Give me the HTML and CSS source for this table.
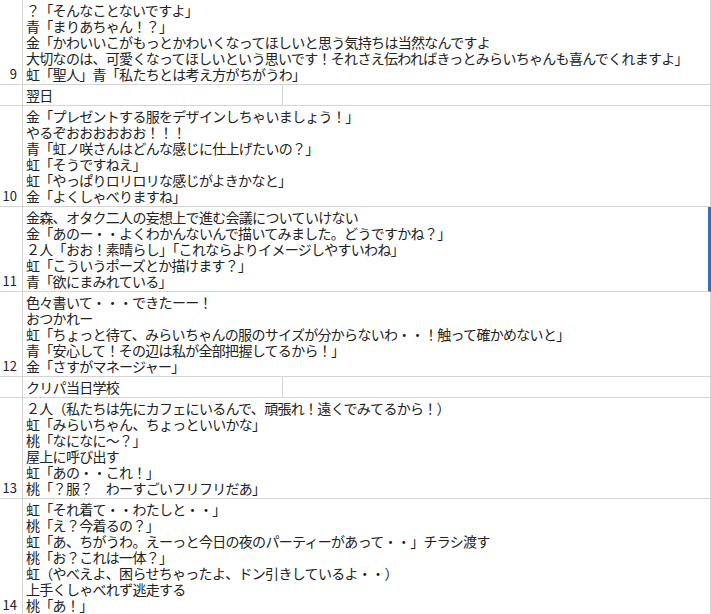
FILE: index.html
```html
<!DOCTYPE html>
<html>
  <head>
    <title>シナリオメモ</title>
    <link rel="stylesheet" href="styles.css">
  </head>
  <body>
    <div class="sheet">
      <div class="row first">
        <div class="num">9</div>
        <div class="cell">？「そんなことないですよ」<br>青「まりあちゃん！？」<br>金「かわいいこがもっとかわいくなってほしいと思う気持ちは当然なんですよ<br>大切なのは、可愛くなってほしいという思いです！それさえ伝わればきっとみらいちゃんも喜んでくれますよ」<br>虹「聖人」青「私たちとは考え方がちがうわ」</div>
      </div>
      <div class="row">
        <div class="num"></div>
        <div class="cell split">
          <div class="part">翌日</div>
          <div class="part"></div>
        </div>
      </div>
      <div class="row">
        <div class="num">10</div>
        <div class="cell">金「プレゼントする服をデザインしちゃいましょう！」<br>やるぞおおおおおお！！！<br>青「虹ノ咲さんはどんな感じに仕上げたいの？」<br>虹「そうですねえ」<br>虹「やっぱりロリロリな感じがよきかなと」<br>金「よくしゃべりますね」</div>
      </div>
      <div class="row selected">
        <div class="num">11</div>
        <div class="cell">金森、オタク二人の妄想上で進む会議についていけない<br>金「あのー・・よくわかんないんで描いてみました。どうですかね？」<br>２人「おお！素晴らし」「これならよりイメージしやすいわね」<br>虹「こういうポーズとか描けます？」<br>青「欲にまみれている」</div>
      </div>
      <div class="row">
        <div class="num">12</div>
        <div class="cell">色々書いて・・・できたーー！<br>おつかれー<br>虹「ちょっと待て、みらいちゃんの服のサイズが分からないわ・・！触って確かめないと」<br>青「安心して！その辺は私が全部把握してるから！」<br>金「さすがマネージャー」</div>
      </div>
      <div class="row">
        <div class="num"></div>
        <div class="cell split">
          <div class="part">クリパ当日学校</div>
          <div class="part"></div>
        </div>
      </div>
      <div class="row">
        <div class="num">13</div>
        <div class="cell">２人（私たちは先にカフェにいるんで、頑張れ！遠くでみてるから！）<br>虹「みらいちゃん、ちょっといいかな」<br>桃「なになに～？」<br>屋上に呼び出す<br>虹「あの・・これ！」<br>桃「？服？　わーすごいフリフリだあ」</div>
      </div>
      <div class="row">
        <div class="num">14</div>
        <div class="cell">虹「それ着て・・わたしと・・」<br>桃「え？今着るの？」<br>虹「あ、ちがうわ。えーっと今日の夜のパーティーがあって・・」チラシ渡す<br>桃「お？これは一体？」<br>虹（やべえよ、困らせちゃったよ、ドン引きしているよ・・）<br>上手くしゃべれず逃走する<br>桃「あ！」</div>
      </div>
    </div>
  </body>
</html>
```

FILE: styles.css
```css
body {
  margin: 0;
  background: #fff;
  font-family: "Noto Sans CJK JP", "Noto Sans", sans-serif;
  color: #222;
}

.sheet {
  width: 711px;
}

.row {
  display: grid;
  grid-template-columns: 23px 1fr;
  border-bottom: 1px solid #d4d4d4;
  border-right: 1px solid #d4d4d4;
}

.row.selected {
  border-right: 3px solid #3a6fb4;
}

.num {
  display: flex;
  align-items: flex-end;
  justify-content: flex-end;
  padding: 0 5px 2px 0;
  font-size: 13px;
  line-height: 16px;
  border-right: 1px solid #d4d4d4;
}

.cell {
  padding: 2px 0 2px 3px;
  font-size: 14px;
  line-height: 16px;
  letter-spacing: -0.7px;
  white-space: nowrap;
}

.cell.split {
  display: grid;
  grid-template-columns: 260px 1fr;
  padding: 0;
}

.part {
  padding: 2px 0 2px 3px;
  min-height: 16px;
}

.part:first-child {
  border-right: 1px solid #d4d4d4;
}
```
